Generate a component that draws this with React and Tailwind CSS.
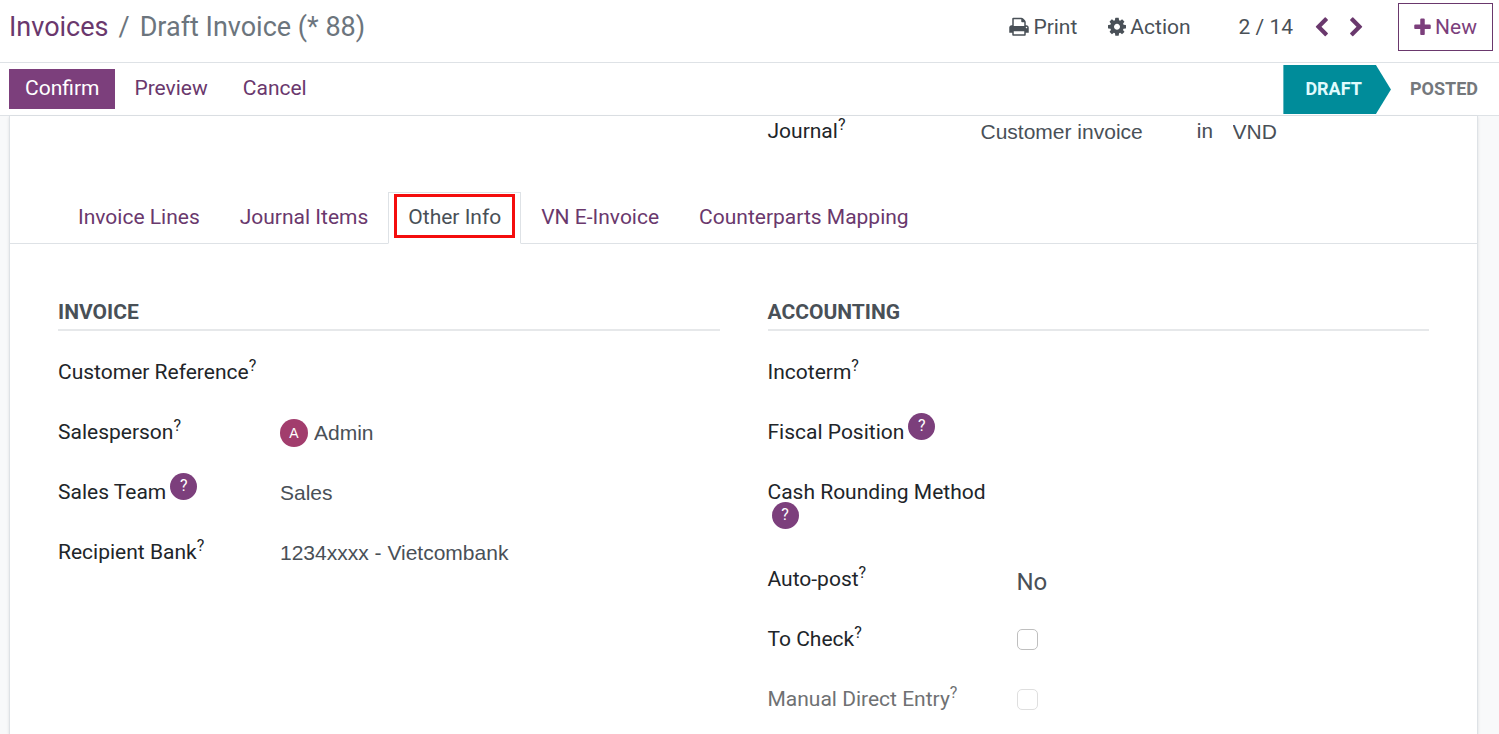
import { useState } from 'react';
import clsx from 'clsx';

const ICONS = {
  print: {
    viewBox: '0 64 1664 1792',
    size: 'w-[20px] h-[21px]',
    d: 'M384 1536h896v-256h-896v256zM384 832h896v-320h-160q-40 0-68-28t-28-68v-160h-640v576zM1536 960q0-26-19-45t-45-19-45 19-19 45 19 45 45 19 45-19 19-45zM1664 960v416q0 13-9.500 22.500t-22.500 9.500h-224v160q0 40-28 68t-68 28h-960q-40 0-68-28t-28-68v-160h-224q-13 0-22.500-9.500t-9.500-22.500v-416q0-79 56.500-135.500t135.500-56.500h64v-544q0-40 28-68t68-28h672q40 0 88 20t76 48l152 152q28 28 48 76t20 88v256h64q79 0 135.500 56.500t56.500 135.500z',
  },
  cog: {
    viewBox: '0 64 1536 1792',
    size: 'w-[18px] h-[21px]',
    d: 'M1024 896q0-106-75-181t-181-75-181 75-75 181 75 181 181 75 181-75 75-181zM1536 787v222q0 12-8 23t-20 13l-185 28q-19 54-39 91 35 50 107 138 10 12 10 25t-9 23q-27 37-99 108t-94 71q-12 0-26-9l-138-108q-44 23-91 38-16 136-29 186-7 28-36 28h-222q-14 0-24.500-8.500t-11.500-21.500l-28-184q-49-16-90-37l-141 107q-10 9-25 9-14 0-25-11-126-114-165-168-7-10-7-23 0-12 8-23 15-21 51-66.500t54-70.500q-27-50-41-99l-183-27q-13-2-21-12.500t-8-23.500v-222q0-12 8-23t19-13l186-28q14-46 39-92-40-57-107-138-10-12-10-24 0-10 9-23 26-36 98.500-107.500t94.500-71.500q13 0 26 10l138 107q44-23 91-38 16-136 29-186 7-28 36-28h222q14 0 24.500 8.500t11.500 21.500l28 184q49 16 90 37l142-107q9-9 24-9 13 0 25 10 129 119 165 170 7 8 7 22 0 12-8 23-15 21-51 66.500t-54 70.500q26 50 41 98l183 28q13 2 21 12.500t8 23.500z',
  },
  plus: {
    viewBox: '0 0 1408 1792',
    size: 'w-[17px] h-[21px]',
    d: 'M1408 736v192q0 40-28 68t-68 28h-416v416q0 40-28 68t-68 28h-192q-40 0-68-28t-28-68v-416h-416q-40 0-68-28t-28-68v-192q0-40 28-68t68-28h416v-416q0-40 28-68t68-28h192q40 0 68 28t28 68v416h416q40 0 68 28t28 68z',
  },
  previous: {
    viewBox: '0 0 1280 1792',
    size: 'w-[15px] h-[21px]',
    d: 'M1171 301l-531 531 531 531q19 19 19 45t-19 45l-166 166q-19 19-45 19t-45-19l-742-742q-19-19-19-45t19-45l742-742q19-19 45-19t45 19l166 166q19 19 19 45t-19 45z',
  },
  next: {
    viewBox: '0 0 1280 1792',
    size: 'w-[15px] h-[21px]',
    d: 'M1107 877l-742 742q-19 19-45 19t-45-19l-166-166q-19-19-19-45t19-45l531-531-531-531q-19-19-19-45t19-45l166-166q19-19 45-19t45 19l742 742q19 19 19 45t-19 45z',
  },
};

const TABS = ['Invoice Lines', 'Journal Items', 'Other Info', 'VN E-Invoice', 'Counterparts Mapping'];

function Icon({ name }) {
  const icon = ICONS[name];
  return (
    <svg viewBox={icon.viewBox} className={clsx('shrink-0 fill-current', icon.size)} aria-hidden="true">
      <path d={icon.d} />
    </svg>
  );
}

function FieldLabel({ id, text, badge, muted }) {
  return (
    <label htmlFor={id} className={clsx('mt-px -mb-px leading-[29px]', muted ? 'text-[#6f7173]' : 'text-[#212529]')}>
      {text}
      {badge ? (
        <sup className="ml-1 inline-flex size-[27px] items-center justify-center rounded-full bg-[#7c3f7c] text-base text-white">?</sup>
      ) : (
        <sup className="text-base leading-0">?</sup>
      )}
    </label>
  );
}

function TextField({ id, value = '' }) {
  return (
    <input id={id} defaultValue={value} className="h-8 w-full min-w-0 bg-transparent font-['Liberation_Sans',sans-serif] text-[#495057] outline-none" />
  );
}

function Field({ id, label, badge, muted, wide, children }) {
  return (
    <div className={clsx('grid min-h-8 items-start gap-x-2', wide ? 'grid-cols-[241px_1fr]' : 'grid-cols-[214px_1fr]')}>
      <FieldLabel id={id} text={label} badge={badge} muted={muted} />
      {children}
    </div>
  );
}

function Section({ title, children }) {
  return (
    <section>
      <h2 className="mb-[26px] border-b-2 border-[#e6e8ea] pb-px font-bold leading-8 text-[#495057]">{title}</h2>
      <div className="flex flex-col gap-7">{children}</div>
    </section>
  );
}

export default function App() {
  const [activeTab, setActiveTab] = useState('Other Info');

  return (
    <div className="flex min-h-screen flex-col bg-[#f8f9fa] font-[Roboto,sans-serif] text-[21px] leading-8 text-[#495057]">
      <header className="flex items-center justify-between border-b border-[#dee2e6] bg-white pt-[3px] pr-1.5 pb-[11px] pl-[9px]">
        <nav className="flex gap-2.5 text-[27px] text-[#6c757d]">
          <a href="#invoices" className="text-[#6a386d]">Invoices</a>
          <span>/</span>
          <span>Draft Invoice (* 88)</span>
        </nav>
        <div className="flex items-center">
          <button type="button" className="mr-[31px] flex items-center gap-1"><Icon name="print" />Print</button>
          <button type="button" className="mr-12 flex items-center gap-1"><Icon name="cog" />Action</button>
          <span className="mr-[21px]">2 / 14</span>
          <button type="button" aria-label="Previous" className="mr-5 text-[#6a386d]"><Icon name="previous" /></button>
          <button type="button" aria-label="Next" className="mr-[34px] text-[#6a386d]"><Icon name="next" /></button>
          <button type="button" className="flex h-12 items-center gap-1 border border-[#6a386d] px-[15px] text-[#7c3f7c]"><Icon name="plus" />New</button>
        </div>
      </header>

      <div className="flex items-center justify-between border-b border-[#dee2e6] bg-white pr-[21px] pl-[9px]">
        <div className="flex gap-[3px] text-[#6a386d]">
          <button type="button" className="h-10 bg-[#7c3f7c] px-4 pb-0.5 text-white">Confirm</button>
          <button type="button" className="h-10 px-4 pb-0.5">Preview</button>
          <button type="button" className="h-10 px-4 pb-0.5">Cancel</button>
        </div>
        <div className="flex items-center gap-[19px] pt-0.5 pb-px text-lg font-bold">
          <button type="button" className="h-[49px] bg-[#008c9a] pr-[29px] pb-0.5 pl-[22px] text-[#e0fbfd] [clip-path:polygon(0_0,calc(100%-15px)_0,100%_50%,calc(100%-15px)_100%,0_100%)]">DRAFT</button>
          <button type="button" className="pb-0.5 text-[#74787c]">POSTED</button>
        </div>
      </div>

      <main className="mr-[21px] ml-[9px] flex-1 border-x border-[#dee2e6] bg-white shadow-sm">
        <div className="grid grid-cols-2 gap-12 px-12">
          <div className="col-start-2 grid grid-cols-[213px_216px_36px_1fr]">
            <FieldLabel id="journal" text="Journal" />
            <TextField id="journal" value="Customer invoice" />
            <label htmlFor="currency" className="mt-px -mb-px leading-[29px]">in</label>
            <TextField id="currency" value="VND" />
          </div>
        </div>

        <div role="tablist" className="mt-11 flex border-b border-[#dee2e6] px-12">
          {TABS.map((tab) => (
            <button
              key={tab}
              type="button"
              role="tab"
              aria-selected={tab === activeTab}
              onClick={() => setActiveTab(tab)}
              className={clsx(
                'relative -mb-px border px-[19px] pt-2 pb-2.5',
                tab === activeTab ? 'border-[#dee2e6] border-b-white text-[#495057]' : 'border-transparent text-[#6a386d]'
              )}
            >
              {tab}
              {tab === 'Other Info' && <span className="absolute inset-x-[5px] top-px bottom-[5px] border-3 border-[#f40d0d]" />}
            </button>
          ))}
        </div>

        <div className="grid grid-cols-2 gap-12 px-12 pt-[52px] pb-3">
          <Section title="INVOICE">
            <Field id="reference" label="Customer Reference">
              <TextField id="reference" />
            </Field>
            <Field id="salesperson" label="Salesperson">
              <div className="flex items-center gap-1.5">
                <span className="flex size-7 shrink-0 items-center justify-center rounded-full bg-[#a23d6d] font-['Liberation_Sans',sans-serif] text-sm text-white">A</span>
                <TextField id="salesperson" value="Admin" />
              </div>
            </Field>
            <Field id="team" label="Sales Team" badge>
              <TextField id="team" value="Sales" />
            </Field>
            <Field id="bank" label="Recipient Bank">
              <TextField id="bank" value="1234xxxx - Vietcombank" />
            </Field>
          </Section>

          <Section title="ACCOUNTING">
            <Field id="incoterm" label="Incoterm" wide>
              <TextField id="incoterm" />
            </Field>
            <Field id="fiscal" label="Fiscal Position" badge wide>
              <TextField id="fiscal" />
            </Field>
            <Field id="rounding" label="Cash Rounding Method" badge wide>
              <TextField id="rounding" />
            </Field>
            <Field id="autopost" label="Auto-post" wide>
              <select id="autopost" defaultValue="No" className="h-9 -mb-1 appearance-none bg-transparent text-2xl outline-none">
                <option>No</option>
                <option>At Date</option>
                <option>Monthly</option>
              </select>
            </Field>
            <Field id="tocheck" label="To Check" wide>
              <input id="tocheck" type="checkbox" className="mt-[5px] size-[21px] appearance-none rounded-[5px] border border-[#bfbfbf] bg-white checked:bg-[#7c3f7c]" />
            </Field>
            <Field id="manual" label="Manual Direct Entry" muted wide>
              <input id="manual" type="checkbox" disabled className="mt-[5px] size-[21px] appearance-none rounded-[5px] border border-[#dfdfdf] bg-white" />
            </Field>
          </Section>
        </div>
      </main>
    </div>
  );
}
